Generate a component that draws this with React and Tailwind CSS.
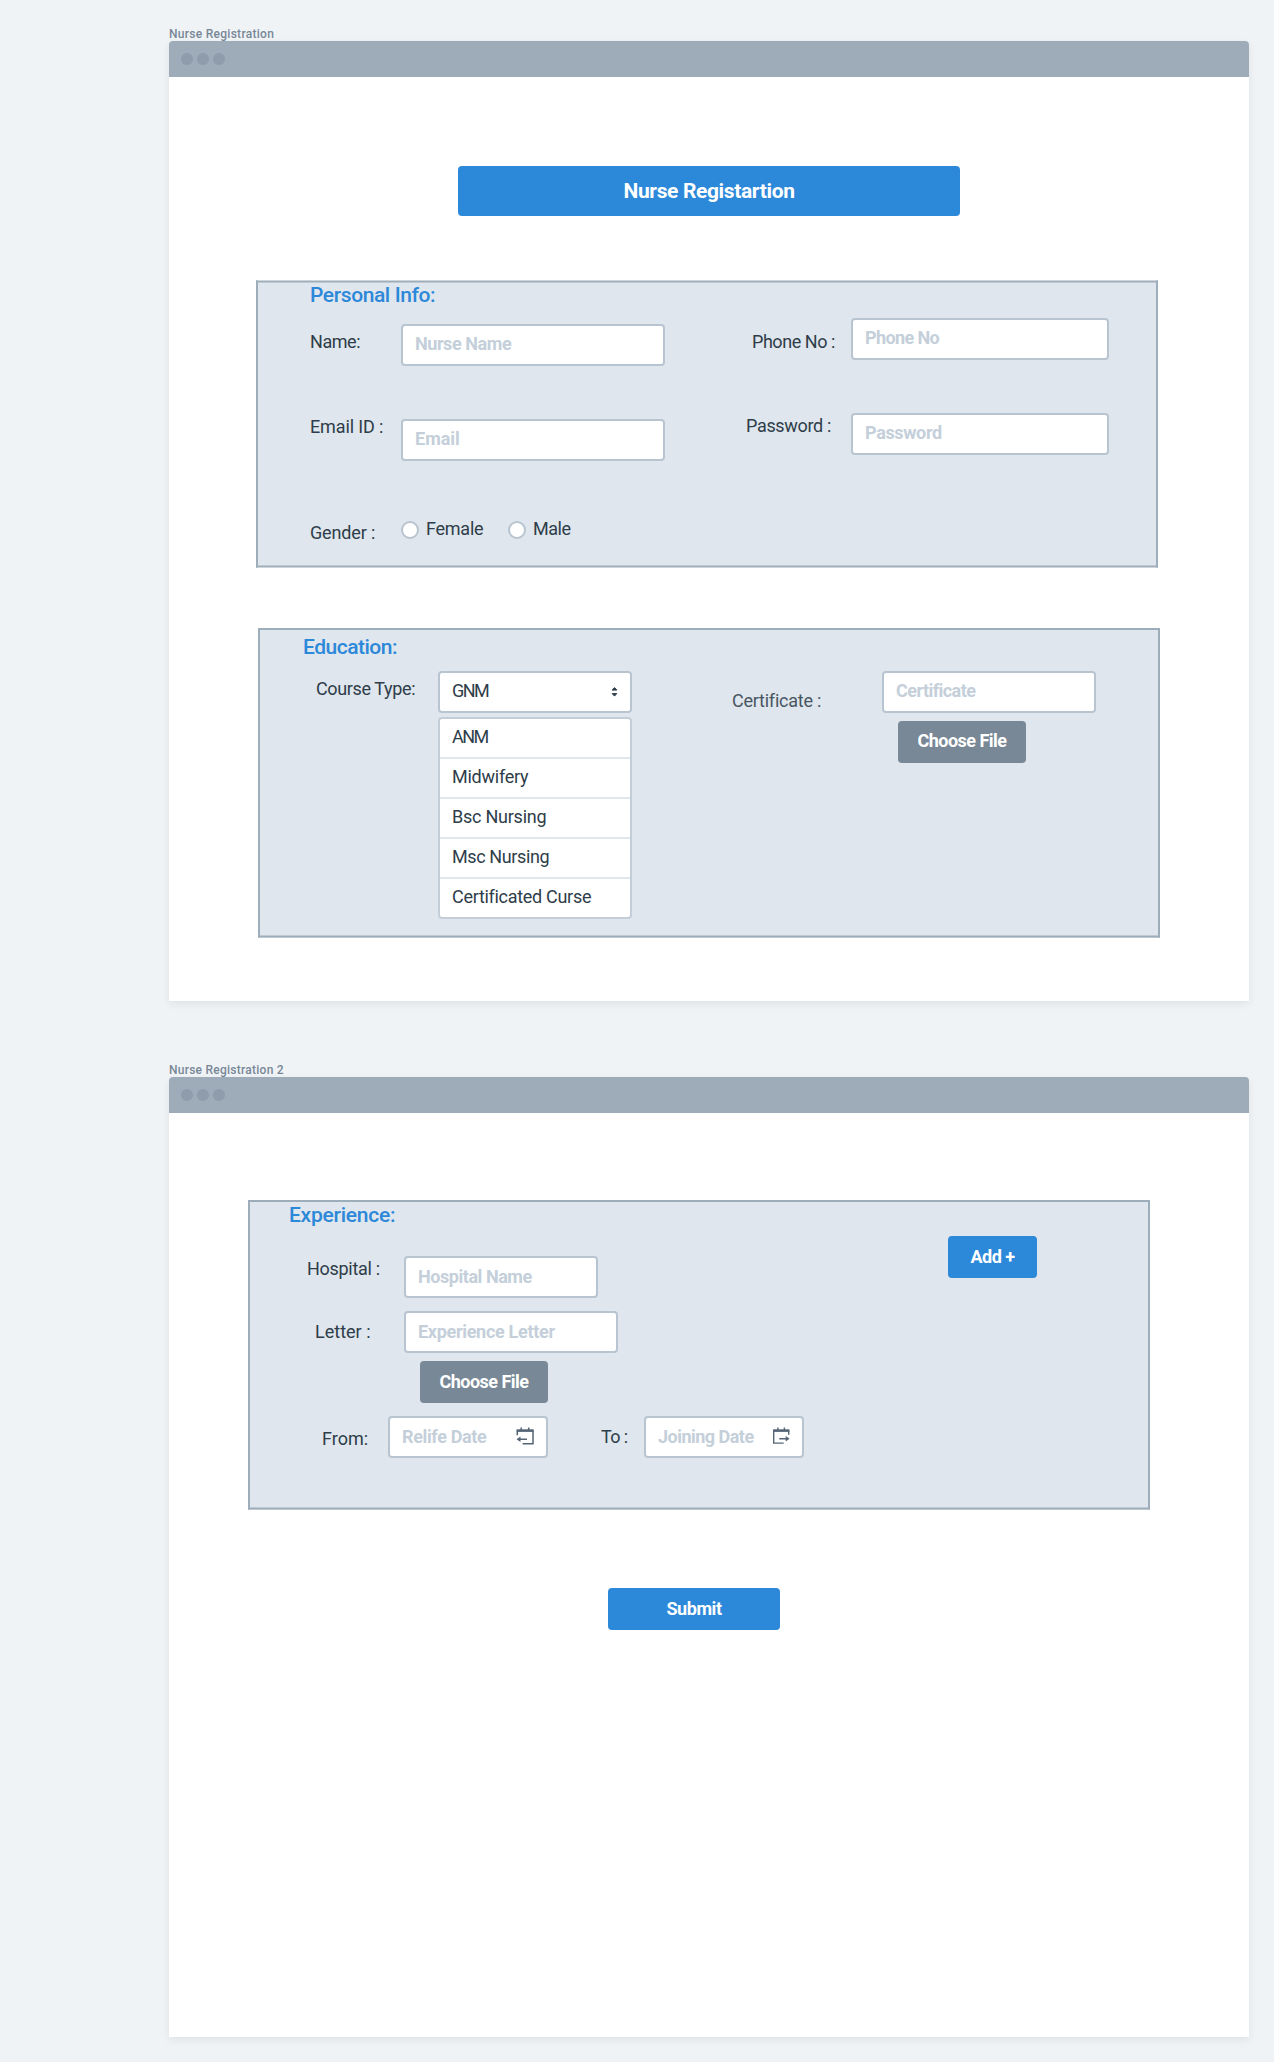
import React from "react";

const label = "block shrink-0 whitespace-pre text-[18px] leading-[21px] text-[#2e3d49]";

function Heading({ className = "", children }) {
  return (
    <h2 className={`whitespace-nowrap text-[21px] leading-6 font-medium text-[#2c88d9] ${className}`}>{children}</h2>
  );
}

function Label({ className = "", children }) {
  return <label className={`${label} ${className}`}>{children}</label>;
}

function Field({ className = "", textClass = "", icon, children }) {
  return (
    <div
      className={`flex h-[42px] shrink-0 justify-between rounded border-2 border-[#b8c4d0] bg-white px-3 ${className}`}
    >
      <span className={`whitespace-nowrap text-[18px] leading-[21px] font-bold text-[#c4cfda] ${textClass}`}>
        {children}
      </span>
      {icon}
    </div>
  );
}

function Button({ className = "", children }) {
  return (
    <button
      className={`flex shrink-0 items-start justify-center rounded text-[18px] leading-[21px] font-bold whitespace-nowrap text-white ${className}`}
    >
      {children}
    </button>
  );
}

function Radio({ className = "", textClass = "", children }) {
  return (
    <div className={`flex shrink-0 items-start ${className}`}>
      <span className="size-[18px] shrink-0 rounded-full border-2 border-[#b8c4d0] bg-white" />
      <span className={`${label} -mt-[3px] ml-[7px] ${textClass}`}>{children}</span>
    </div>
  );
}

function CalendarLeft() {
  return (
    <svg className="mt-[9px] size-[18px] shrink-0" viewBox="0 0 18 18" fill="none" stroke="#556575" strokeWidth="1.5">
      <path d="M5.2 0.4v3M12.7 0.4v3" />
      <path d="M0.6 3.6h17.1" strokeWidth="2.6" />
      <path d="M1.3 3.5v4.7M17 3.5v13.3M17.7 16.8H6.6M3 12.3h8" />
      <path d="M0.5 12.3l4-2.8v5.6z" fill="#556575" stroke="none" />
    </svg>
  );
}

function CalendarRight() {
  return (
    <svg className="mt-[9px] size-[18px] shrink-0" viewBox="0 0 18 18" fill="none" stroke="#556575" strokeWidth="1.4">
      <path d="M5.9 0.4v3M12.4 0.4v3" />
      <path d="M1 3.6h16.4" strokeWidth="2.6" />
      <path d="M1.7 3.5v12.8M1 16.1h10.7M16.7 3.5v4.2M7.3 11.7H15" />
      <path d="M17.6 11.7l-3.9-2.8v5.6z" fill="#556575" stroke="none" />
    </svg>
  );
}

function Window({ title, titleClass, children }) {
  return (
    <section>
      <div className={`h-3.5 text-[12px] leading-[14px] font-medium whitespace-nowrap text-[#788796] ${titleClass}`}>
        <span>{title}</span>
      </div>
      <div className="h-[960px] w-[1080px] rounded-t bg-white shadow-[0_3px_8px_rgba(0,0,0,0.07)]">
        <div className="flex h-9 items-center gap-1 rounded-t bg-[#9eacb9] pl-3">
          <span className="size-3 rounded-full bg-[#8e9cab]" />
          <span className="size-3 rounded-full bg-[#8e9cab]" />
          <span className="size-3 rounded-full bg-[#8e9cab]" />
        </div>
        {children}
      </div>
    </section>
  );
}

const courses = [
  ["ANM", "tracking-[-1.5px]"],
  ["Midwifery", "tracking-[-0.25px]"],
  ["Bsc Nursing", "tracking-[-0.24px]"],
  ["Msc Nursing", "tracking-[-0.39px]"],
  ["Certificated Curse", "tracking-[-0.3px]"],
];

function PersonalInfo() {
  return (
    <div className="mt-16 ml-[87px] flex h-72 w-[902px] border-x-2 border-y border-x-[#9eadba] border-y-[#ced6dc] bg-[#dfe6ed] shadow-[inset_0_1px_#9eadba,inset_0_-1px_#9eadba,inset_0_2px_#bec9d3,inset_0_-2px_#bec9d3]">
      <div className="w-[487px] pl-[52px]">
        <Heading className="mt-0.5 tracking-[-0.4px]">Personal Info:</Heading>
        <div className="mt-[17px] flex items-start">
          <Label className="mt-[7px] w-[91px] tracking-[-0.45px]">Name:</Label>
          <Field className="w-[264px] pt-[7px]" textClass="tracking-[-0.42px]">Nurse Name</Field>
        </div>
        <div className="mt-[53px] flex items-start">
          <Label className="-mt-[3px] w-[91px] tracking-[-0.13px]">Email ID :</Label>
          <Field className="w-[264px] pt-[7px]">Email</Field>
        </div>
        <div className="mt-[60px] flex items-start">
          <Label className="mt-px w-[91px] tracking-[-0.14px]">Gender :</Label>
          <Radio className="w-[107px]" textClass="tracking-[-0.25px]">Female</Radio>
          <Radio textClass="tracking-[-0.5px]">Male</Radio>
        </div>
      </div>
      <div className="pt-[37px]">
        <div className="flex items-start">
          <Label className="mt-[13px] w-[106px] pl-[7px] tracking-[-0.45px]">Phone No :</Label>
          <Field className="w-[258px] pt-[7px]" textClass="tracking-[-0.62px]">Phone No</Field>
        </div>
        <div className="mt-[53px] flex items-start">
          <Label className="mt-0.5 w-[106px] pl-px tracking-[-0.33px]">Password :</Label>
          <Field className="w-[258px] pt-[7px]" textClass="tracking-[-0.35px]">Password</Field>
        </div>
      </div>
    </div>
  );
}

function Education() {
  return (
    <div className="mt-[60px] ml-[89px] flex h-[310px] w-[902px] border-2 border-b border-[#9eadba] border-b-[#bec9d3] bg-[#dfe6ed] shadow-[inset_0_-1px_#9eadba,inset_0_-2px_#bec9d3]">
      <div className="w-[471px] pl-[43px]">
        <Heading className="mt-[5px] tracking-[-0.5px]">Education:</Heading>
        <div className="mt-3 flex items-start pl-[13px]">
          <Label className="mt-[7px] w-[122px] tracking-[-0.37px]">Course Type:</Label>
          <div className="w-[194px]">
            <div className="flex h-[42px] justify-between rounded border-2 border-[#b8c4d0] bg-white px-3 pt-[7px]">
              <span className={`${label} tracking-[-1.5px]`}>GNM</span>
              <svg className="mt-1.5 h-3 w-[7px]" viewBox="0 0 7 12" fill="#2e3d49" stroke="#2e3d49" strokeLinejoin="round">
                <path d="M1.2 4.1h4.6L3.5 1.6zM1.2 7.6h4.6L3.5 10.1z" />
              </svg>
            </div>
            <ul className="mt-1 rounded border-2 border-[#c4ced9] bg-white">
              {courses.map(([name, tracking]) => (
                <li key={name} className="h-10 border-b-2 border-[#dfe6ed] pt-[7px] pl-3 last:h-[38px] last:border-b-0">
                  <span className={`${label} ${tracking}`}>{name}</span>
                </li>
              ))}
            </ul>
          </div>
        </div>
      </div>
      <div className="flex items-start pt-[41px]">
        <Label className="mt-[19px] w-[151px] pl-px tracking-[-0.24px] opacity-85">Certificate :</Label>
        <div>
          <Field className="w-[214px] pt-[7px]" textClass="tracking-[-0.55px]">Certificate</Field>
          <Button className="mt-2 ml-4 h-[42px] w-32 bg-[#788896] pt-[9px] tracking-[-0.52px]">Choose File</Button>
        </div>
      </div>
    </div>
  );
}

function Experience() {
  return (
    <div className="mt-[87px] ml-[79px] flex h-[310px] w-[902px] border-2 border-b border-[#9eadba] border-b-[#bec9d3] bg-[#dfe6ed] shadow-[inset_0_-1px_#9eadba,inset_0_-2px_#bec9d3]">
      <div className="w-[698px]">
        <Heading className="mt-px ml-[39px] tracking-[-0.25px]">Experience:</Heading>
        <div className="mt-[29px] flex items-start">
          <Label className="mt-0.5 w-[154px] pl-[57px] tracking-[-0.3px]">Hospital :</Label>
          <Field className="w-[194px] pt-2" textClass="tracking-[-0.45px]">Hospital Name</Field>
        </div>
        <div className="mt-[13px] flex items-start">
          <Label className="mt-2.5 w-[154px] pl-[65px]">Letter :</Label>
          <div>
            <Field className="w-[214px] pt-2" textClass="tracking-[-0.3px]">Experience Letter</Field>
            <Button className="mt-2 ml-4 h-[42px] w-32 bg-[#788896] pt-2.5 tracking-[-0.52px]">Choose File</Button>
          </div>
        </div>
        <div className="mt-[13px] flex items-start">
          <Label className="mt-3 w-[138px] pl-[72px]">From:</Label>
          <Field className="w-40" textClass="mt-2 tracking-[-0.36px]" icon={<CalendarLeft />}>Relife Date</Field>
          <Label className="mt-2.5 w-24 pl-[53px] tracking-[-0.6px]">To :</Label>
          <Field className="w-40" textClass="mt-2 tracking-[-0.52px]" icon={<CalendarRight />}>Joining Date</Field>
        </div>
      </div>
      <Button className="mt-[34px] h-[42px] w-[89px] bg-[#2c88d9] pt-2.5 tracking-[-0.5px]">Add +</Button>
    </div>
  );
}

export default function App() {
  return (
    <main className="flex h-[2062px] w-[1274px] flex-col gap-[62px] bg-[#eff3f6] pt-[27px] pl-[169px] font-['Roboto',sans-serif]">
      <Window title="Nurse Registration" titleClass="tracking-[0.28px]">
        <div className="mt-[89px] ml-[289px] flex h-[50px] w-[502px] justify-center rounded bg-[#2c88d9] pt-[13px]">
          <h1 className="text-[21px] leading-6 font-bold tracking-[-0.36px] text-white">Nurse Registartion</h1>
        </div>
        <PersonalInfo />
        <Education />
      </Window>
      <Window title="Nurse Registration 2" titleClass="tracking-[0.25px]">
        <Experience />
        <Button className="mt-[78px] ml-[439px] h-[42px] w-[172px] bg-[#2c88d9] pt-2.5 tracking-[-0.43px]">Submit</Button>
      </Window>
    </main>
  );
}
